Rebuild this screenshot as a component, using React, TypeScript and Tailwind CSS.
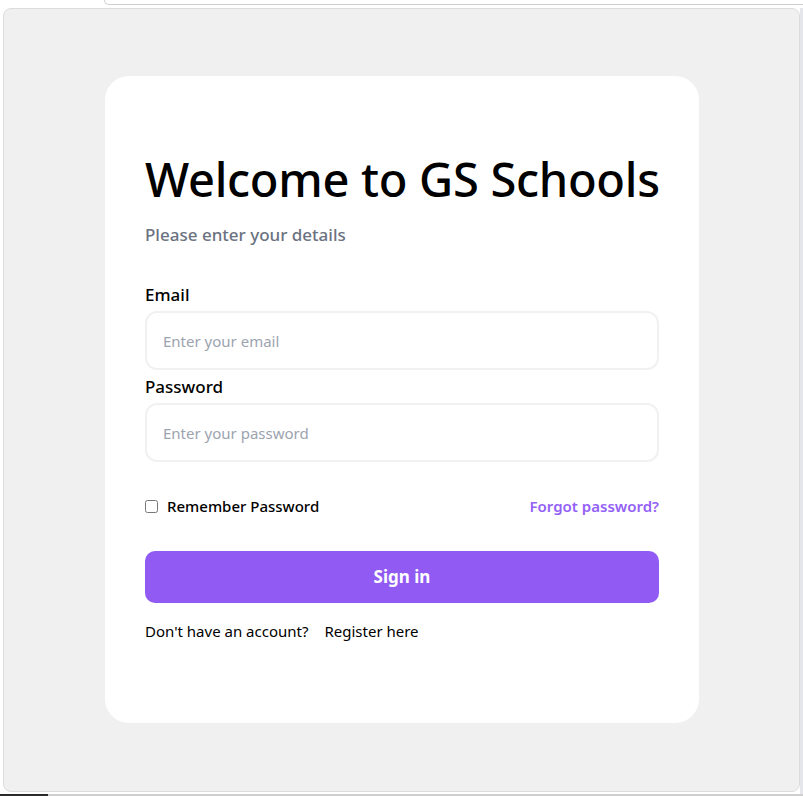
import React from 'react';

export default function App() {
  return (
    <div className="w-[803px] h-[796px] bg-white flex flex-col overflow-hidden" style={{ fontFamily: '"Noto Sans", "Open Sans", sans-serif' }}>
      {/* browser chrome strip */}
      <div className="h-[8px] flex">
        <div className="ml-[104px] flex-1 h-[5px] border-b border-l border-[#cfcfcf] rounded-bl-[10px] bg-white" />
      </div>

      <div className="flex h-[786px]">
        <div className="ml-[3px] w-[797px] h-[784px] bg-[#f0f0f0] border border-[#dcdcdc] rounded-[8px] pl-[101px] pt-[67px]">
          <div className="w-[594px] h-[647px] bg-white rounded-[24px] px-[40px] pt-[73px] flex flex-col">
            <h1 className="whitespace-nowrap text-[47px] leading-[60px] font-medium text-black tracking-[-0.3px]">Welcome to GS Schools</h1>
            <p className="mt-[14px] text-[17px] leading-6 font-medium text-[#6b7280]">Please enter your details</p>

            <form className="mt-[36px] flex flex-col" onSubmit={e => e.preventDefault()}>
              <label className="text-[17px] leading-6 font-medium text-black">Email</label>
              <input
                type="email"
                placeholder="Enter your email"
                className="mt-[4px] h-[59px] w-full rounded-xl border-2 border-[#f1f1f3] px-4 text-[15px] text-black placeholder:text-[#9ca3af] outline-none"
              />
              <label className="mt-[5px] text-[17px] leading-6 font-medium text-black">Password</label>
              <input
                type="password"
                placeholder="Enter your password"
                className="mt-[4px] h-[59px] w-full rounded-xl border-2 border-[#f1f1f3] px-4 text-[15px] text-black placeholder:text-[#9ca3af] outline-none"
              />

              <div className="mt-[33px] flex items-center justify-between">
                <label className="flex items-center gap-[9px] text-[15px] font-medium text-black">
                  <input type="checkbox" className="w-[13px] h-[13px] m-0" />
                  Remember Password
                </label>
                <a href="#" className="text-[15px] font-semibold text-[#9461f5]">Forgot password?</a>
              </div>

              <button type="submit" className="mt-[33px] h-[52px] w-full rounded-[10px] bg-[#915bf3] text-white text-[17px] font-bold">
                Sign in
              </button>

              <div className="mt-[17px] flex gap-4 text-[15px] text-black">
                <span>Don't have an account?</span>
                <a href="#">Register here</a>
              </div>
            </form>
          </div>
        </div>
        <div className="w-[3px] h-full bg-[#e4e6eb]" />
      </div>

      <div className="h-[2px] flex">
        <div className="w-[48px] bg-[#2b2b2b]" />
        <div className="flex-1 bg-[#cfcfcf]" />
      </div>
    </div>
  );
}
